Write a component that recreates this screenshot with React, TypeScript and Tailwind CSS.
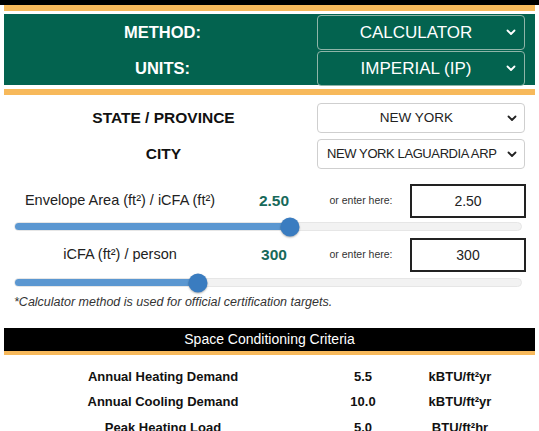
const font = { fontFamily: '"Liberation Sans", Arial, sans-serif' };

function Chevron({ color }: { color: string }) {
  return (
    <svg width="10" height="7" viewBox="0 0 10 7" className="shrink-0">
      <path d="M1.5 1.5 L5 5 L8.5 1.5" fill="none" stroke={color} strokeWidth="1.8" strokeLinecap="round" strokeLinejoin="round" />
    </svg>
  );
}

function GreenSelect({ value }: { value: string }) {
  return (
    <div className="flex h-[35px] w-[208px] items-center rounded-[4px] border border-[#8fb5a8] pr-[8px] text-white">
      <span className="flex-1 pl-[8px] text-center text-[17px]">{value}</span>
      <Chevron color="#ffffff" />
    </div>
  );
}

function WhiteSelect({ value, left }: { value: string; left?: boolean }) {
  return (
    <div className="flex h-[30px] w-[208px] items-center rounded-[4px] border border-[#cfcfcf] bg-white pr-[7px] text-[#222]">
      <span className={left ? 'flex-1 pl-[9px] text-[13px] tracking-[-0.4px]' : 'flex-1 pl-[8px] text-center text-[13.5px]'}>{value}</span>
      <Chevron color="#222222" />
    </div>
  );
}

function Slider({ pct }: { pct: number }) {
  return (
    <div className="relative ml-[10px] mr-[13px] h-[9px] rounded-full border border-[#e6e6e6] bg-[#f2f2f2]">
      <div className="h-full rounded-full bg-[#5b97d1]" style={{ width: `${pct}%` }} />
      <div
        className="absolute top-1/2 h-[19px] w-[19px] -translate-x-1/2 -translate-y-1/2 rounded-full bg-[#3a7cc0] shadow-[0_1px_2px_rgba(0,0,0,0.3)]"
        style={{ left: `${pct}%` }}
      />
    </div>
  );
}

function InputRow({ label, value, box }: { label: string; value: string; box: string }) {
  return (
    <div className="flex items-center">
      <div className="w-[232px] text-center text-[14.5px] text-[#222]">{label}</div>
      <div className="w-[76px] text-center text-[15.5px] font-bold text-[#17695a]">{value}</div>
      <div className="w-[98px] text-center text-[10.5px] text-[#333]">or enter here:</div>
      <div className="flex h-[34px] w-[116px] items-center justify-center border-2 border-[#222] text-[14px] text-[#222]">{box}</div>
    </div>
  );
}

function ResultRow({ label, value, unit }: { label: string; value: string; unit: string }) {
  return (
    <div className="flex h-[25.5px] items-center text-[13px] font-bold text-[#111]">
      <div className="w-[318px] text-center">{label}</div>
      <div className="w-[82px] text-center">{value}</div>
      <div className="w-[112px] text-center">{unit}</div>
    </div>
  );
}

export default function App() {
  return (
    <div className="h-[431px] w-[539px] overflow-hidden bg-white px-[4px]" style={font}>
      <div className="-mx-[4px] h-[5px] bg-black" />
      <div className="h-[6px] bg-[#f7b95b]" />
      <div className="mt-[3px] flex h-[71px] flex-col gap-[1px] bg-[#03634f] pt-[1px] pr-[10px]">
        <div className="flex items-center">
          <div className="flex-1 pl-[4px] text-center text-[16.5px] font-bold text-white">METHOD:</div>
          <GreenSelect value="CALCULATOR" />
        </div>
        <div className="flex items-center">
          <div className="flex-1 pl-[4px] text-center text-[16.5px] font-bold text-white">UNITS:</div>
          <GreenSelect value="IMPERIAL (IP)" />
        </div>
      </div>
      <div className="mt-[4px] h-[6px] bg-[#f7b95b]" />

      <div className="mt-[8px] flex flex-col gap-[6px] pr-[10px]">
        <div className="flex items-center">
          <div className="flex-1 pl-[6px] text-center text-[15.5px] font-bold text-[#111]">STATE / PROVINCE</div>
          <WhiteSelect value="NEW YORK" />
        </div>
        <div className="flex items-center">
          <div className="flex-1 pl-[6px] text-center text-[15.5px] font-bold text-[#111]">CITY</div>
          <WhiteSelect value="NEW YORK LAGUARDIA ARP" left />
        </div>
      </div>

      <div className="mt-[15px]">
        <InputRow label="Envelope Area (ft²) / iCFA (ft²)" value="2.50" box="2.50" />
      </div>
      <div className="mt-[4px]">
        <Slider pct={54.3} />
      </div>
      <div className="mt-[7px]">
        <InputRow label="iCFA (ft²) / person" value="300" box="300" />
      </div>
      <div className="mt-[6px]">
        <Slider pct={36.2} />
      </div>
      <div className="mt-[6px] pl-[10px] text-[12.5px] italic text-[#333]">
        *Calculator method is used for official certification targets.
      </div>

      <div className="mt-[16px] flex h-[23px] items-center justify-center bg-black text-[14px] text-white">
        Space Conditioning Criteria
      </div>
      <div className="h-[4px] bg-[#f7b95b]" />
      <div className="mt-[9px]">
        <ResultRow label="Annual Heating Demand" value="5.5" unit="kBTU/ft²yr" />
        <ResultRow label="Annual Cooling Demand" value="10.0" unit="kBTU/ft²yr" />
        <ResultRow label="Peak Heating Load" value="5.0" unit="BTU/ft²hr" />
      </div>
    </div>
  );
}
